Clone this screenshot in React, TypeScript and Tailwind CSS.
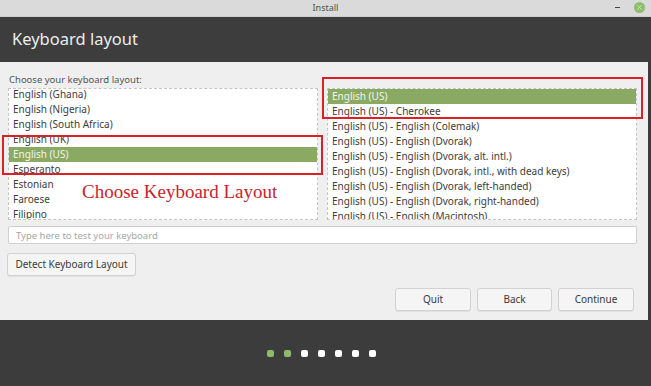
import { X } from "lucide-react";

const leftLayouts = [
  "English (Ghana)",
  "English (Nigeria)",
  "English (South Africa)",
  "English (UK)",
  "English (US)",
  "Esperanto",
  "Estonian",
  "Faroese",
  "Filipino",
];

const rightVariants = [
  "English (US)",
  "English (US) - Cherokee",
  "English (US) - English (Colemak)",
  "English (US) - English (Dvorak)",
  "English (US) - English (Dvorak, alt. intl.)",
  "English (US) - English (Dvorak, intl., with dead keys)",
  "English (US) - English (Dvorak, left-handed)",
  "English (US) - English (Dvorak, right-handed)",
  "English (US) - English (Macintosh)",
];

const steps = [true, true, false, false, false, false, false];

function ListRow({ label, selected }: { label: string; selected: boolean }) {
  return (
    <div
      className={
        selected
          ? "h-[15px] leading-[15px] px-[4px] bg-[#8aaa64] text-[#f2f5ee] whitespace-nowrap"
          : "h-[15px] leading-[15px] px-[4px] text-[#3c3c3c] whitespace-nowrap"
      }
    >
      {label}
    </div>
  );
}

function Button({ children, className }: { children: React.ReactNode; className?: string }) {
  return (
    <button
      className={
        "h-[23px] border border-[#d2d2d2] bg-[#f5f5f5] rounded-[3px] text-[10px] text-[#3a3a3a] shadow-[0_1px_0_rgba(0,0,0,0.06)] " +
        (className ?? "")
      }
    >
      {children}
    </button>
  );
}

export default function App() {
  return (
    <div className="relative w-[651px] h-[386px] overflow-hidden flex flex-col bg-[#3c3c3c] font-['Noto_Sans',sans-serif]">
      {/* Title bar */}
      <div className="h-[17px] bg-[#dadada] border-b border-[#cdcdcd] flex items-center relative">
        <div className="flex-1 text-center text-[9px] text-[#505050]">Install</div>
        <div className="absolute right-[6px] top-[2px] flex items-center gap-[14px]">
          <div className="w-[5px] h-[1.5px] bg-[#444]" />
          <div className="w-[11px] h-[11px] rounded-full bg-[#8ebd6b] flex items-center justify-center">
            <X size={7} strokeWidth={3} color="#d8ecc8" />
          </div>
        </div>
      </div>

      {/* Header */}
      <div className="h-[45px] bg-[#3d3d3d] flex items-center pl-[12px]">
        <h1 className="text-[16.5px] text-[#ececec] leading-none">Keyboard layout</h1>
      </div>

      {/* Body */}
      <div className="h-[258px] flex">
        <div className="w-[648px] bg-[#efefef] pl-[8px] pr-[11px] pt-[12px] flex flex-col">
          <div className="h-[14px] leading-[12px] text-[9.5px] text-[#555] pl-[1px]">Choose your keyboard layout:</div>
          <div className="flex gap-[9px] text-[10px]">
            <div className="w-[310px] h-[132px] bg-white border border-dashed border-[#c4c4c4] overflow-hidden">
              <div className="mt-[-2px]">
                {leftLayouts.map((l) => (
                  <ListRow key={l} label={l} selected={l === "English (US)"} />
                ))}
              </div>
            </div>
            <div className="w-[310px] h-[132px] bg-white border border-dashed border-[#c4c4c4] overflow-hidden">
              <div>
                {rightVariants.map((l, i) => (
                  <ListRow key={l} label={l} selected={i === 0} />
                ))}
              </div>
            </div>
          </div>

          <input
            className="mt-[6px] h-[18px] w-full bg-white border border-[#d0d0d0] rounded-[2px] px-[7px] text-[9.5px] text-[#333] placeholder:text-[#a6a6a6] outline-none"
            placeholder="Type here to test your keyboard"
          />

          <div className="mt-[6px] ml-[-1px]">
            <Button className="w-[129px] h-[22px]">Detect Keyboard Layout</Button>
          </div>

          <div className="mt-[12px] flex justify-end gap-[6px] pr-[3px]">
            <Button className="w-[76px]">Quit</Button>
            <Button className="w-[75px]">Back</Button>
            <Button className="w-[76px]">Continue</Button>
          </div>
        </div>
      </div>

      {/* Footer / progress */}
      <div className="flex-1 bg-[#3c3c3c] flex items-center justify-center gap-[10px] pr-[8px]">
        {steps.map((done, i) => (
          <div
            key={i}
            className={
              done
                ? "w-[7px] h-[7px] rounded-[2px] bg-[#8fb96b]"
                : "w-[7px] h-[7px] rounded-[2px] bg-white"
            }
          />
        ))}
      </div>

      {/* Annotations */}
      <div className="absolute left-[2px] top-[135px] w-[321px] h-[40px] border-2 border-[#dd1f26]" />
      <div className="absolute left-[322px] top-[77px] w-[321px] h-[42px] border-2 border-[#dd1f26]" />
      <div className="absolute left-[82px] top-[180px] text-[19px] leading-[24px] text-[#c9232c] font-['Liberation_Serif',serif]">
        Choose Keyboard Layout
      </div>
    </div>
  );
}
